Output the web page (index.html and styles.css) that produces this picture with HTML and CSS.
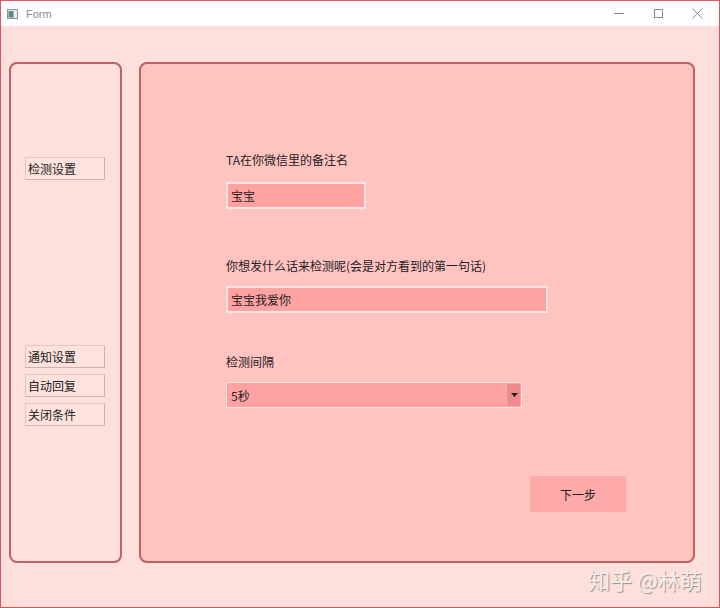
FILE: index.html
```html
<!DOCTYPE html>
<html lang="zh-CN">
<head>
<meta charset="utf-8" />
<title>Form</title>
<link rel="stylesheet" href="styles.css">
</head>
<body>
<div class="window">
  <div class="titlebar">
    <svg class="app-icon" width="11" height="10" viewBox="0 0 11 10">
      <rect x="0.5" y="0.5" width="10" height="9" fill="#e8ecef" stroke="#8a9499" />
      <rect x="1.5" y="2" width="5" height="6.5" fill="#5d8a7a" />
    </svg>
    <span class="title">Form</span>
    <span class="controls">
      <svg width="39" height="25" viewBox="0 0 39 25"><line x1="14" y1="12.5" x2="24" y2="12.5" stroke="#8a8a8a" /></svg>
      <svg width="39" height="25" viewBox="0 0 39 25"><rect x="15.5" y="8.5" width="8" height="8" fill="none" stroke="#8a8a8a" /></svg>
      <svg width="39" height="25" viewBox="0 0 39 25"><path d="M14.5 7.5 L24.5 17.5 M24.5 7.5 L14.5 17.5" stroke="#8a8a8a" /></svg>
    </span>
  </div>
  <div class="content">
    <div class="side">
      <button class="nav first">检测设置</button>
      <div class="nav-group">
        <button class="nav">通知设置</button>
        <button class="nav">自动回复</button>
        <button class="nav">关闭条件</button>
      </div>
    </div>
    <div class="main">
      <div class="label l1">TA在你微信里的备注名</div>
      <div class="field short">宝宝</div>
      <div class="label l2">你想发什么话来检测呢(会是对方看到的第一句话)</div>
      <div class="field long">宝宝我爱你</div>
      <div class="label l3">检测间隔</div>
      <div class="combo">
        <span>5秒</span>
        <span class="arrow"><svg width="7" height="4" viewBox="0 0 7 4"><path d="M0 0 L7 0 L3.5 4 Z" fill="#222" /></svg></span>
      </div>
      <button class="next">下一步</button>
    </div>
  </div>
  <div class="watermark">知乎 @林萌</div>
</div>
</body>
</html>
```

FILE: styles.css
```css
body {
	margin: 0;
	font-family: "Noto Sans CJK SC", "Noto Sans", sans-serif;
	font-size: 12px;
	color: #222;
}
.window {
	position: relative;
	width: 720px;
	height: 608px;
	box-sizing: border-box;
	border: 1px solid #d9585c;
	background-color: #fde0db;
	display: flex;
	flex-direction: column;
}
.titlebar {
	height: 25px;
	background-color: #ffffff;
	display: flex;
	align-items: center;
	flex-shrink: 0;
}
.app-icon {
	margin-left: 6px;
	margin-right: 8px;
}
.title {
	color: #8c8c8c;
	font-family: "Liberation Sans", sans-serif;
	font-size: 11px;
}
.controls {
	margin-left: auto;
	display: flex;
	margin-right: 2px;
}
.content {
	display: flex;
	padding: 36px 24px 0 8px;
	gap: 17px;
}
.side {
	width: 113px;
	height: 501px;
	box-sizing: border-box;
	border: 2px solid #c05f66;
	border-radius: 8px;
	background-color: #fde0db;
	padding: 93px 0 0 14px;
	display: flex;
	flex-direction: column;
}
.nav {
	width: 80px;
	height: 23px;
	margin: 0;
	padding: 0 0 0 2px;
	text-align: left;
	font-family: inherit;
	font-size: 12px;
	color: #222;
	background-color: #fde2de;
	border: 1px solid #e7c5c2;
	border-right-color: #d4b0ad;
	border-bottom-color: #d4b0ad;
}
.nav-group {
	margin-top: 165px;
	display: flex;
	flex-direction: column;
	gap: 6px;
}
.main {
	width: 556px;
	height: 501px;
	box-sizing: border-box;
	border: 2px solid #c05f66;
	border-radius: 8px;
	background-color: #ffc3c0;
	padding: 88px 0 0 85px;
	display: flex;
	flex-direction: column;
	align-items: flex-start;
}
.label {
	line-height: 16px;
	height: 16px;
}
.l1 { margin-bottom: 14px; }
.l2 { margin-top: 49px; margin-bottom: 12px; }
.l3 { margin-top: 41px; margin-bottom: 12px; }
.field {
	height: 27px;
	box-sizing: border-box;
	border: 2px solid #fbe6e3;
	background-color: #ffa2a2;
	padding-left: 3px;
	line-height: 23px;
}
.short { width: 140px; }
.long { width: 322px; }
.combo {
	width: 296px;
	height: 26px;
	box-sizing: border-box;
	border: 1px solid #fbe4e0;
	background-color: #ffa2a2;
	display: flex;
	align-items: center;
	padding-left: 4px;
}
.arrow {
	margin-left: auto;
	width: 12px;
	height: 22px;
	background-color: #f08a8e;
	border-left: 1px solid #d0a0a0;
	display: flex;
	align-items: center;
	justify-content: center;
	margin-right: 1px;
}
.next {
	margin: 68px 0 0 304px;
	width: 96px;
	height: 36px;
	border: none;
	background-color: #ffaaaa;
	font-family: inherit;
	font-size: 12px;
	color: #222;
}
.watermark {
	position: absolute;
	right: 17px;
	bottom: 12px;
	font-size: 22px;
	color: #f4eeec;
	text-shadow: 1px 1px 1px #9c8e8c;
}
```
